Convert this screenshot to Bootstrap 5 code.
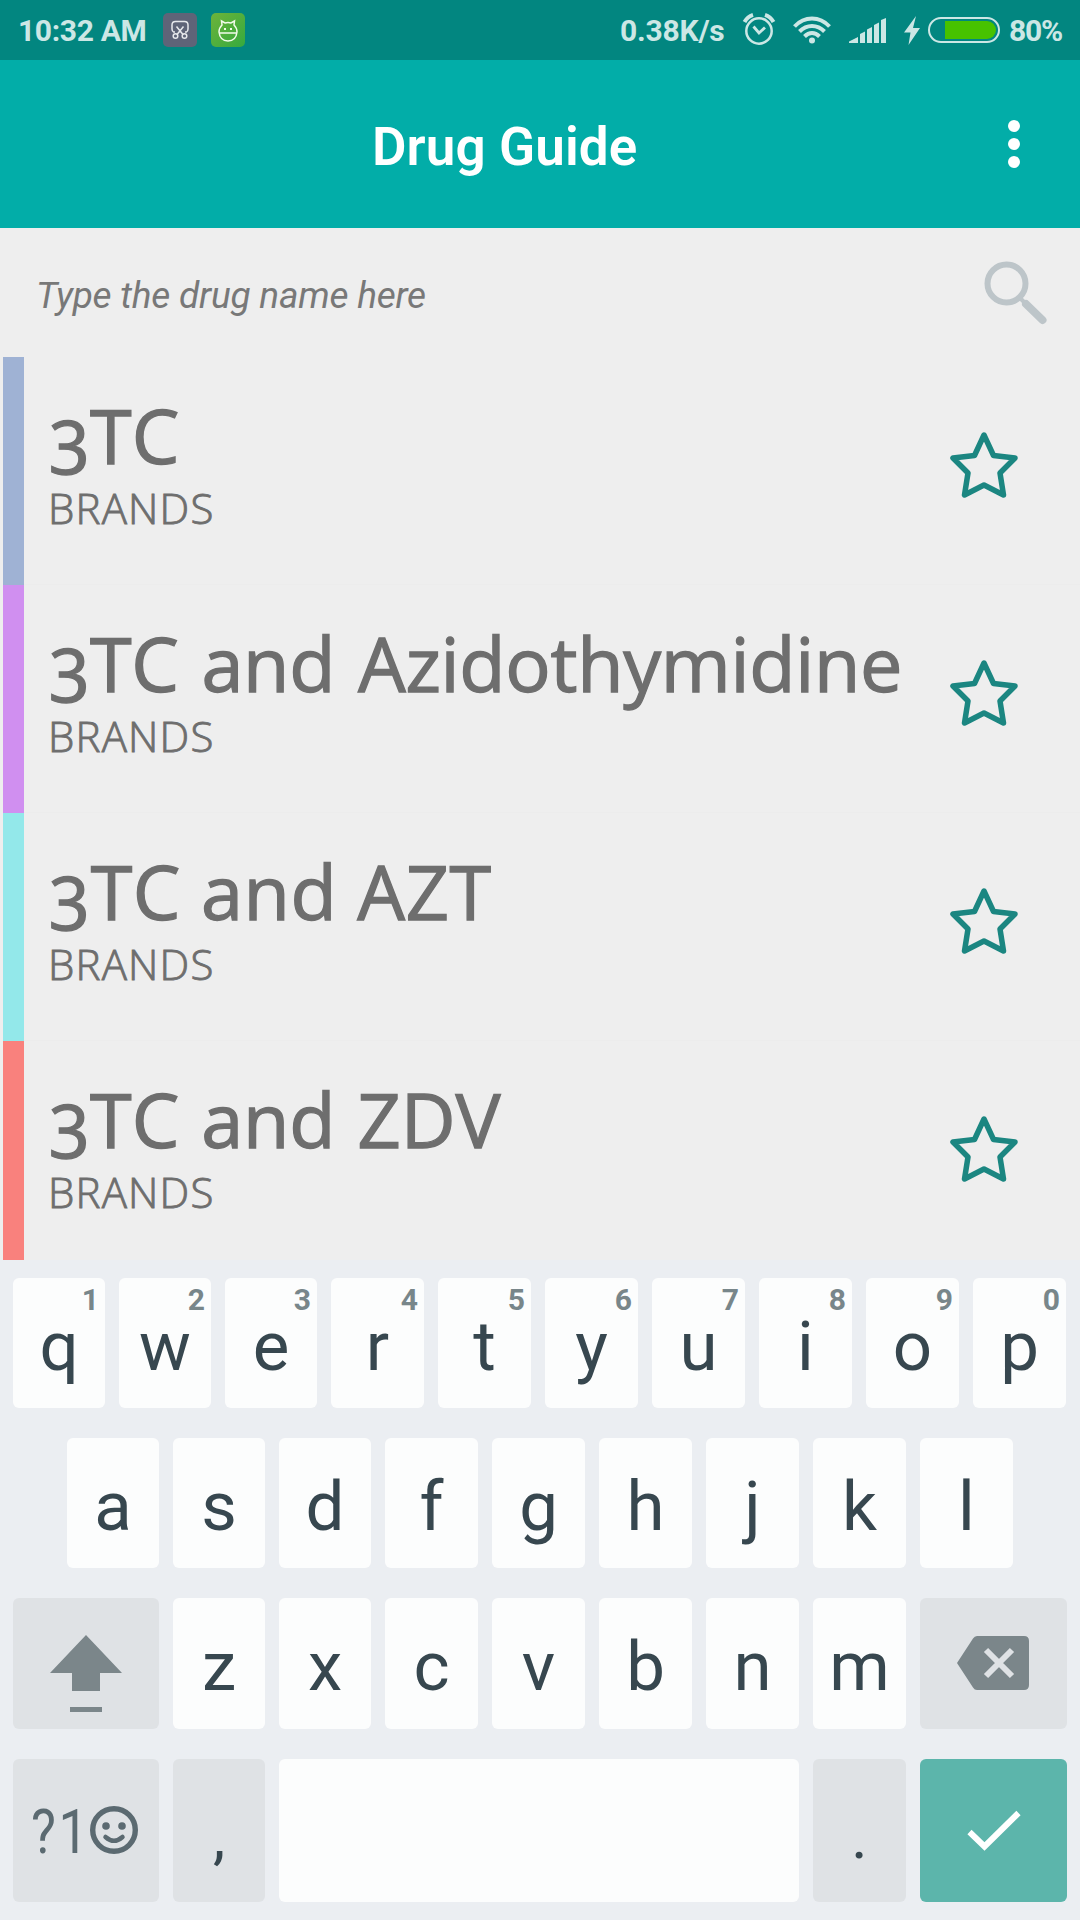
<!DOCTYPE html>
<html lang="en">
<head>
<meta charset="utf-8">
<meta name="viewport" content="width=device-width, initial-scale=1">
<title>Drug Guide</title>
<link href="https://cdn.jsdelivr.net/npm/bootstrap@5.3.0/dist/css/bootstrap.min.css" rel="stylesheet">
<style>
  body { width: 1080px; height: 1920px; overflow: hidden; background: #eee; font-family: Roboto, "Liberation Sans", sans-serif; }
  svg { display: block; flex: none; overflow: visible; }
  .status-bar { height: 60px; background: #028680; color: #cce7e5; font-size: 30px; font-weight: 700; line-height: 36px; padding-left: 18px; }
  .status-bar > span { padding-top: 1px; }
  .clock { width: 145px; letter-spacing: -.35px; }
  .net-speed { width: 123px; letter-spacing: -.2px; }
  .battery-text { width: 71px; letter-spacing: -1.2px; }
  .gap-l8 { margin-left: 8px; }
  .gap-l9 { margin-left: 9px; }
  .gap-l14 { margin-left: 14px; }
  .gap-l17 { margin-left: 17px; }
  .gap-l18 { margin-left: 18px; }
  .app-bar { height: 168px; background: #02ada8; padding-right: 58px; }
  .app-title { font-size: 53px; font-weight: 600; line-height: 64px; letter-spacing: .1px; padding: 5px 0 0 372px; color: #fff; }
  .search-row { height: 129px; padding: 0 32px 0 36px; }
  .search-input { font-size: 37px; font-style: italic; color: #787878; background: transparent; letter-spacing: -.22px; padding: 6px 0 0; }
  .search-input::placeholder { color: #787878; opacity: 1; }
  .drug-list { height: 903px; padding-left: 3px; }
  .drug-item { height: 228px; flex: none; border-bottom: 1px solid #ececec; color: #6e6e6e; font-family: "Open Sans", "Noto Sans", sans-serif; }
  .stripe { width: 21px; height: 228px; flex: none; }
  .drug-text { padding: 42px 0 0 24px; white-space: nowrap; }
  .drug-name { font-size: 75.6px; line-height: 72px; padding-left: 1px; font-variant-numeric: oldstyle-nums; -webkit-text-stroke: 1.3px #6e6e6e; letter-spacing: -.1px; word-spacing: 2.5px; }
  .drug-name.snug { letter-spacing: -.3px; word-spacing: 3.5px; }
  .drug-name.loose { letter-spacing: .5px; word-spacing: 0; }
  .raised { line-height: 0; vertical-align: 3px; }
  .drug-kind { font-size: 42px; font-weight: 300; line-height: 48px; margin-top: 13px; letter-spacing: 1.2px; -webkit-text-stroke: .9px #6e6e6e; }
  .star { margin: 74px 61px 0 auto; }
  .keyboard { height: 660px; background: #ebeef2; padding: 18px 13px; gap: 30px; color: #37474f; }
  .key-row { height: 130px; gap: 14px; flex: none; }
  .key-row.home { padding-left: 54px; }
  .key-row.third { height: 131px; }
  .key-row.bottom { height: 143px; }
  .letter-key { width: 93px; flex: none; border-radius: 6px; background: #fcfdfd; font-size: 69px; line-height: 80px; padding-top: 29px; text-align: center; }
  .letter-key.slim { width: 92px; }
  .space-key { width: 520px; flex: none; border-radius: 6px; background: #fcfdfd; }
  .side-key { width: 146px; flex: none; border-radius: 6px; background: #dfe2e5; }
  .side-key.wide { width: 147px; }
  .punct-key { width: 93px; flex: none; border-radius: 6px; background: #dfe2e5; font-size: 62px; line-height: 80px; padding-top: 38px; text-align: center; }
  .punct-key.slim { width: 92px; }
  .side-key.done-key { background: #5cb5ab; }
  .hint { top: 7px; right: 6px; font-size: 30px; line-height: 30px; font-weight: 700; color: #78868a; }
  .symbols-key { color: #5b6a71; padding-left: 18px; }
  .symbols-label { font-size: 62px; line-height: 60px; width: 76px; flex: none; white-space: nowrap; margin-top: 43px; transform: scaleX(.85); transform-origin: 0 0; letter-spacing: 3px; }
  .smiley { margin-top: 47px; margin-left: -17px; }
</style>
</head>
<body>
<header>
  <div class="status-bar d-flex align-items-center">
    <span class="clock">10:32 AM</span>
    <svg width="34" height="34" viewBox="0 0 34 34" fill="none" stroke="#e6e8ec" stroke-width="1.5">
      <rect width="34" height="34" rx="5" fill="#5e6478" stroke="none"/>
      <path d="M12 19H10.500Q9 18 9 16V12Q9 8.500 12.500 8.500H21.500Q25 8.500 25 12V16Q25 18 23.500 19H22M13.500 13.500L20 21.500M20.500 13.500L14 21.500"/>
      <circle cx="12.500" cy="23" r="2.300"/><circle cx="21.500" cy="23" r="2.300"/>
    </svg>
    <svg class="gap-l14" width="34" height="34" viewBox="0 0 34 34" fill="none" stroke="#f2fbea" stroke-width="1.500">
      <defs><linearGradient id="leaf" x1="0" y1="0" x2="1" y2="1"><stop stop-color="#6db33a"/><stop offset="1" stop-color="#35aa3f"/></linearGradient></defs>
      <rect width="34" height="34" rx="5" fill="url(#leaf)" stroke="none"/>
      <path d="M8 20H26M11 12L10.500 8L14 10Q17 9 20 10L23.500 8L23 12Q26 15 26 19Q25 28 17 28Q9 28 8 19Q8 15 11 12Z"/>
      <path d="M13 16H15M19 16H21" stroke-width="2"/>
    </svg>
    <span class="net-speed ms-auto">0.38K/s</span>
    <svg width="33" height="34" viewBox="0 0 33 34" fill="none" stroke="#cce7e5" stroke-width="2.500">
      <circle cx="16" cy="18" r="12.700"/><path d="M10.500 13.500L16 20L22 14.500" stroke-width="2.800"/>
      <path d="M1.500 9Q4.500 3.500 10 1.800M22 1.800Q27.500 3.500 30.500 9" stroke-width="4"/>
    </svg>
    <svg class="gap-l17" width="38" height="28" viewBox="0 0 38 28" fill="none" stroke="#cce7e5" stroke-width="4">
      <path d="M1.500 10.500Q9 2.500 19 2.500T36.500 10.500M6.500 15.500Q12 10 19 10T31.500 15.500M11.500 20.500Q15 17 19 17T26.500 20.500"/>
      <circle cx="19" cy="24.500" r="3" fill="#cce7e5" stroke="none"/>
    </svg>
    <svg class="gap-l18" width="37" height="25" viewBox="0 0 37 25" fill="#cce7e5">
      <path d="M0 25V23.500L9 19V25ZM11 16L16 13.500V25H11ZM18 11.500L23 9V25H18ZM25 7L30 4.500V25H25ZM32 2L37 0V25H32Z"/>
    </svg>
    <svg class="gap-l18" width="16" height="29" viewBox="0 0 16 29" fill="#cce7e5"><path d="M12 0L0 16.500H6.500L4.500 29L16 12H9Z"/></svg>
    <svg class="gap-l8" width="72" height="26" viewBox="0 0 72 26">
      <rect x="1" y="1" width="70" height="24" rx="12" fill="none" stroke="#cce7e5" stroke-width="2"/>
      <path d="M17 4H59A9 9 0 0 1 59 22H17Z" fill="#47c200"/>
    </svg>
    <span class="battery-text gap-l9">80%</span>
  </div>
  <div class="app-bar d-flex align-items-center justify-content-between">
    <h1 class="app-title mb-0">Drug Guide</h1>
    <svg width="16" height="48" viewBox="0 0 16 48" fill="#fff"><circle cx="8" cy="6" r="6"/><circle cx="8" cy="24" r="6"/><circle cx="8" cy="42" r="6"/></svg>
  </div>
</header>
<main>
  <div class="search-row d-flex align-items-center">
    <input class="search-input border-0 flex-grow-1" type="text" placeholder="Type the drug name here" aria-label="Drug name">
    <svg width="64" height="64" viewBox="0 0 64 64" fill="none" stroke="#bdc5c9"><circle cx="22.500" cy="22.500" r="19" stroke-width="6"/><path d="M36 37L40 41" stroke-width="4"/><path d="M42 43L58.500 59" stroke-width="8" stroke-linecap="round"/></svg>
  </div>
  <div class="drug-list d-flex flex-column overflow-hidden" id="drugs"></div>
</main>
<section class="keyboard d-flex flex-column">
  <div class="key-row d-flex" data-keys="qwertyuiop" data-hints="1234567890" data-slim="3"></div>
  <div class="key-row home d-flex" data-keys="asdfghjkl" data-slim="3"></div>
  <div class="key-row third d-flex">
    <div class="side-key"><svg width="146" height="130" viewBox="0 0 146 130" fill="#7b868a"><path d="M73 37L109 75H87V93H59V75H37Z"/><path d="M57 109H89V114H57Z"/></svg></div>
    <div class="key-row third d-flex" data-keys="zxcvbnm" data-slim="2"></div>
    <div class="side-key wide"><svg width="146" height="130" viewBox="0 0 146 130"><path d="M57 38H104Q109 38 109 43V87Q109 92 104 92H57Q54.500 92 53 89.500L37 65L53 40.500Q54.500 38 57 38Z" fill="#7b868a"/><path d="M66 52L92 78M92 52L66 78" stroke="#dfe2e5" stroke-width="6"/></svg></div>
  </div>
  <div class="key-row bottom d-flex">
    <div class="side-key symbols-key d-flex align-items-start">
      <span class="symbols-label">?1</span>
      <svg class="smiley" width="48" height="48" viewBox="0 0 48 48" fill="none" stroke="#5b6a71"><circle cx="24" cy="24" r="21.300" stroke-width="5.400"/><circle cx="16" cy="20" r="3.800" fill="#5b6a71" stroke="none"/><circle cx="32" cy="20" r="3.800" fill="#5b6a71" stroke="none"/><path d="M15.500 31Q24 38.500 32.500 31" stroke-width="4.500" stroke-linecap="round"/></svg>
    </div>
    <div class="punct-key slim">,</div>
    <div class="space-key"></div>
    <div class="punct-key">.</div>
    <div class="side-key wide done-key"><svg width="146" height="143" viewBox="0 0 146 143" fill="none" stroke="#fff" stroke-width="6"><path d="M49.500 73L64.500 87.500L98.500 54"/></svg></div>
  </div>
</section>
<script>
  const drugs = [["3TC", "#9fb2d4"], ["3TC and Azidothymidine", "#d08ff0", "snug"], ["3TC and AZT", "#93e8ea", "loose"], ["3TC and ZDV", "#f9817d"]];
  document.getElementById("drugs").innerHTML = drugs.map(([name, color, extra = ""]) => `
    <div class="drug-item d-flex">
      <div class="stripe" style="background:${color}"></div>
      <div class="drug-text"><div class="drug-name ${extra}"><span class="raised">${name[0]}</span>${name.slice(1)}</div><div class="drug-kind">BRANDS</div></div>
      <svg class="star" width="70" height="70" viewBox="0 0 70 70" fill="none" stroke="#1b8681" stroke-width="5.5" stroke-linejoin="round"><path d="M35 4L44.500 24.500L66 27L51 42L54.500 64L35 54L15.500 64L19 42L4 27L25.500 24.500Z"/></svg>
    </div>`).join("");
  document.querySelectorAll("[data-keys]").forEach(row => {
    const hints = row.dataset.hints || "";
    row.innerHTML = [...row.dataset.keys].map((k, i) =>
      `<div class="letter-key position-relative ${i < row.dataset.slim ? "slim" : ""}">${k}${hints[i] ? `<span class="hint position-absolute">${hints[i]}</span>` : ""}</div>`).join("");
  });
</script>
<script src="https://cdn.jsdelivr.net/npm/bootstrap@5.3.0/dist/js/bootstrap.bundle.min.js"></script>
</body>
</html>
